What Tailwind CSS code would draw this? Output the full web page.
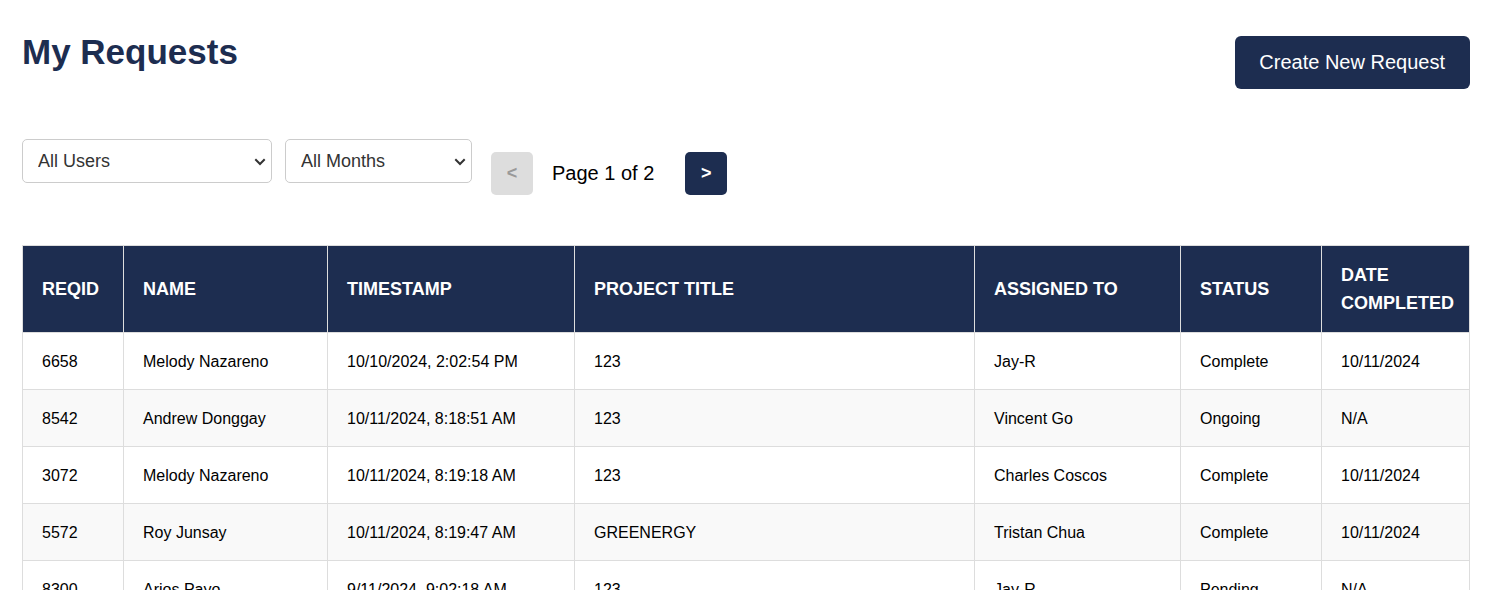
<!DOCTYPE html>
<html lang="en">
<head>
<meta charset="utf-8">
<meta name="viewport" content="width=device-width, initial-scale=1">
<title>My Requests</title>
<script src="https://cdn.jsdelivr.net/npm/@tailwindcss/browser@4"></script>
</head>
<body class="bg-white text-black font-['Liberation_Sans',Arial,sans-serif] pl-[22px] pr-[23px] pt-7 pb-7">
<header class="flex items-start justify-between">
  <h1 class="text-[35px] leading-12 font-bold text-[#1d2d50]">My Requests</h1>
  <button type="button" class="mt-2 rounded-md bg-[#1d2d50] pl-6 pr-[25px] pb-0.5 h-[53px] text-xl text-white cursor-pointer">Create New Request</button>
</header>
<main>
  <div class="mt-[50px] flex items-start">
    <div class="relative w-[250px]">
      <select aria-label="User" class="block w-full h-11 appearance-none rounded-[5px] border border-[#ccc] bg-white pl-[15px] pr-6 text-lg text-[#333]"><option>All Users</option></select>
      <svg class="pointer-events-none absolute right-1.5 top-[19px] h-2 w-3" viewBox="0 0 12 8" fill="none" stroke="#333" stroke-width="2" aria-hidden="true"><path d="M1.3 1.3 6 6 10.700 1.3"/></svg>
    </div>
    <div class="relative ml-[13px] w-[187px]">
      <select aria-label="Month" class="block w-full h-11 appearance-none rounded-[5px] border border-[#ccc] bg-white pl-[15px] pr-6 text-lg text-[#333]"><option>All Months</option></select>
      <svg class="pointer-events-none absolute right-1.5 top-[19px] h-2 w-3" viewBox="0 0 12 8" fill="none" stroke="#333" stroke-width="2" aria-hidden="true"><path d="M1.3 1.3 6 6 10.700 1.3"/></svg>
    </div>
    <nav aria-label="Pagination" class="ml-[19px] mt-[13px] flex items-center">
      <button type="button" disabled aria-label="Previous page" class="w-[42px] h-[43px] pb-0.5 rounded-[5px] bg-[#ddd] text-lg font-bold text-[#999]">&lt;</button>
      <span class="ml-[19px] mr-[31px] pb-0.5 text-xl">Page 1 of 2</span>
      <button type="button" aria-label="Next page" class="w-[42px] h-[43px] pb-0.5 rounded-[5px] bg-[#1d2d50] text-lg font-bold text-white cursor-pointer">&gt;</button>
    </nav>
  </div>
  <table class="mt-[50px] w-full table-fixed border-collapse text-left text-base/[26px] [&_th]:border [&_th]:border-[#ddd] [&_th]:pl-[19px] [&_th]:pr-4 [&_th]:py-[15px] [&_td]:border [&_td]:border-[#ddd] [&_td]:pl-[19px] [&_td]:pr-4 [&_td]:pt-4 [&_td]:pb-3.5">
    <colgroup>
      <col class="w-[101px]"><col class="w-[204px]"><col class="w-[247px]"><col><col class="w-[206px]"><col class="w-[141px]"><col class="w-[148px]">
    </colgroup>
    <thead class="bg-[#1d2d50] text-lg/7 text-white">
      <tr><th>REQID</th><th>NAME</th><th>TIMESTAMP</th><th>PROJECT TITLE</th><th>ASSIGNED TO</th><th>STATUS</th><th>DATE COMPLETED</th></tr>
    </thead>
    <tbody class="[&>tr:nth-child(even)]:bg-[#f9f9f9]">
      <tr><td>6658</td><td>Melody Nazareno</td><td>10/10/2024, 2:02:54 PM</td><td>123</td><td>Jay-R</td><td>Complete</td><td>10/11/2024</td></tr>
      <tr><td>8542</td><td>Andrew Donggay</td><td>10/11/2024, 8:18:51 AM</td><td>123</td><td>Vincent Go</td><td>Ongoing</td><td>N/A</td></tr>
      <tr><td>3072</td><td>Melody Nazareno</td><td>10/11/2024, 8:19:18 AM</td><td>123</td><td>Charles Coscos</td><td>Complete</td><td>10/11/2024</td></tr>
      <tr><td>5572</td><td>Roy Junsay</td><td>10/11/2024, 8:19:47 AM</td><td>GREENERGY</td><td>Tristan Chua</td><td>Complete</td><td>10/11/2024</td></tr>
      <tr><td>8300</td><td>Arjos Payo</td><td>9/11/2024, 9:02:18 AM</td><td>123</td><td>Jay-R</td><td>Pending</td><td>N/A</td></tr>
    </tbody>
  </table>
</main>
</body>
</html>
